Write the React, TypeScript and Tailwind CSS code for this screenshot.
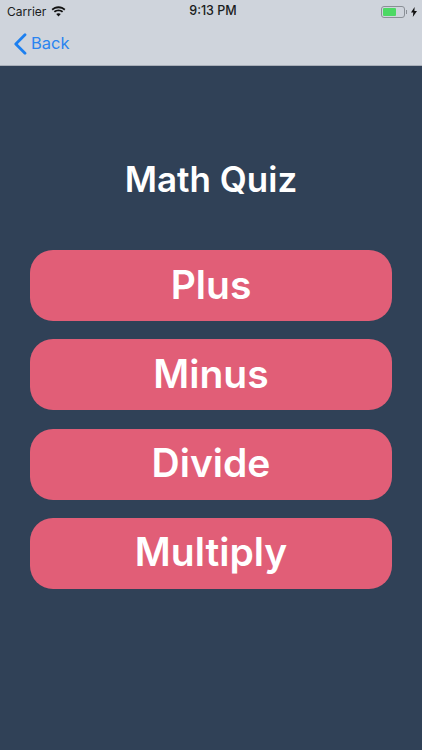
const levels = ["Plus", "Minus", "Divide", "Multiply"];

function WifiIcon() {
    return (
        <svg width="15" height="11" viewBox="0 0 15 11" className="ml-[5px]">
            <path d="M7.5 2.2c2.2 0 4.2.8 5.7 2.2l1.2-1.3C12.6 1.2 10.2.2 7.5.2S2.4 1.2.6 3.1l1.2 1.3c1.5-1.4 3.5-2.2 5.7-2.2z" fill="#111" />
            <path d="M7.5 5.2c1.3 0 2.5.5 3.5 1.3l1.2-1.3c-1.3-1.1-2.9-1.8-4.7-1.8s-3.4.7-4.7 1.8L4 6.5c1-.8 2.2-1.3 3.5-1.3z" fill="#111" />
            <path d="M7.5 7.2c-.9 0-1.7.3-2.3.9l2.3 2.5 2.3-2.5c-.6-.6-1.4-.9-2.3-.9z" fill="#111" />
        </svg>
    );
}

export default function App() {
    return (
        <div className="flex h-[750px] w-[422px] flex-col overflow-hidden bg-[#304157] font-['Inter','Liberation_Sans',sans-serif]">
            {/* Status + nav bar */}
            <header className="flex h-[66px] shrink-0 flex-col border-b border-[#a9afb9] bg-[#cfd4dc]">
                <div className="flex h-[22px] items-center justify-between pl-[7px] pr-[5px] pt-[1px] text-[#1a1c20]">
                    <div className="flex w-[150px] items-center text-[12px]">
                        Carrier
                        <WifiIcon />
                    </div>
                    <span className="pl-[2px] text-[12.5px] font-medium">9:13 PM</span>
                    <div className="flex w-[150px] items-center justify-end">
                        <div className="flex h-[12px] w-[24px] items-center rounded-[3px] border border-[#8a8f96] p-[1px]">
                            <div className="h-full w-[13px] rounded-[1px] bg-[#4cd964]" />
                        </div>
                        <div className="ml-[1px] h-[4px] w-[1px] bg-[#8a8f96]" />
                        <svg width="6" height="10" viewBox="0 0 6 10" className="ml-[4px]">
                            <path d="M3.6 0 0 5.6h2.3L1.8 10 6 3.9H3.4z" fill="#111" />
                        </svg>
                    </div>
                </div>
                <div className="flex flex-1 items-center pl-[13px]">
                    <svg width="14" height="22" viewBox="0 0 14 22" fill="none">
                        <path d="M12 1.8 2.8 11l9.2 9.2" stroke="#1c7ff0" strokeWidth="2.8" strokeLinecap="round" strokeLinejoin="round" />
                    </svg>
                    <span className="ml-[4px] text-[16.5px] text-[#2a84f0]">Back</span>
                </div>
            </header>

            <main className="flex flex-col px-[30px]">
                <h1 className="mt-[92px] text-center text-[35px] leading-[42px] font-semibold text-white">Math Quiz</h1>
                <div className="mt-[50px] flex flex-col gap-[18.33px]">
                    {levels.map((level) => (
                        <button key={level} className="h-[71px] rounded-[23px] bg-[#e15e77] pb-[2px] text-center text-[39px] leading-[46px] font-semibold text-white">
                            {level}
                        </button>
                    ))}
                </div>
            </main>
        </div>
    );
}
